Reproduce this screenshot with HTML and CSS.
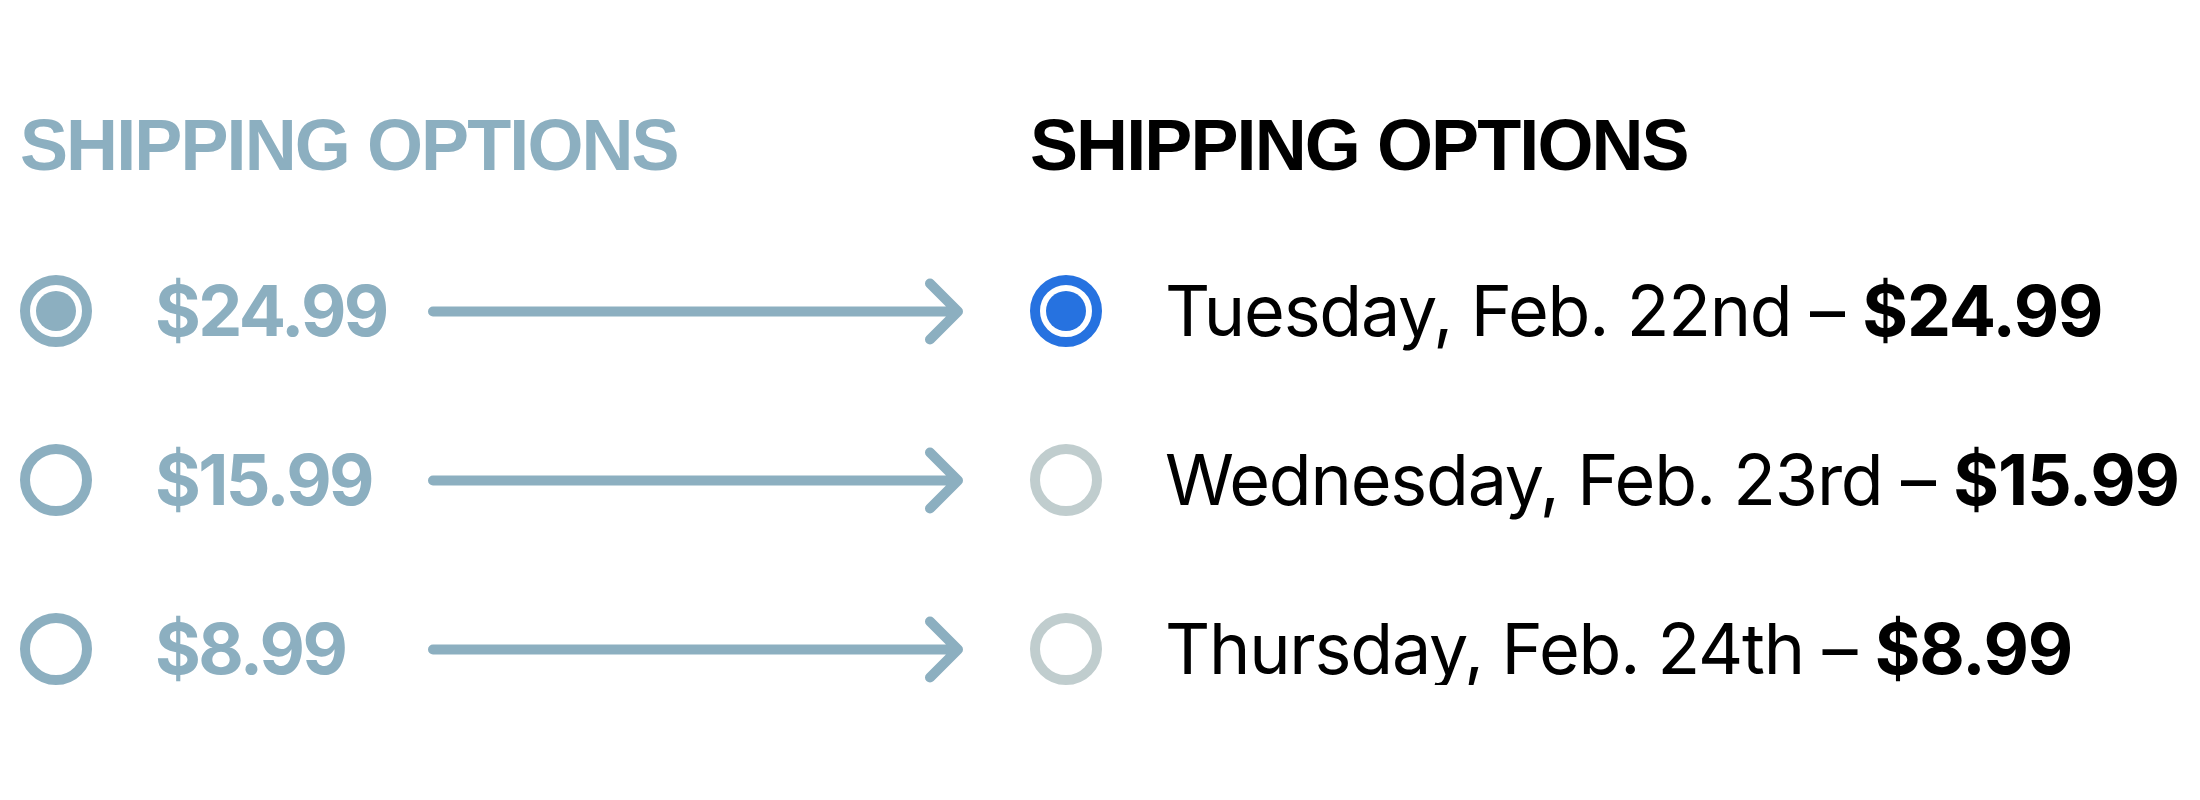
FILE: index.html
```html
<!DOCTYPE html>
<html lang="en">
<head>
<meta charset="utf-8">
<title>Shipping options</title>
<link rel="stylesheet" href="styles.css">
</head>
<body>
<main class="compare">
  <section class="panel panel-before">
    <h2 class="heading heading-muted">SHIPPING OPTIONS</h2>
    <ul class="options">
      <li class="option">
        <span class="radio radio-muted is-checked"></span>
        <span class="price">$24.99</span>
        <svg class="arrow" viewBox="0 0 540 72" width="540" height="72" aria-hidden="true">
          <path d="M5 36.5 H530 M502 8.5 L530 36.5 L502 64.5" fill="none" stroke="#8cafc0" stroke-width="10" stroke-linecap="round" stroke-linejoin="round"/>
        </svg>
      </li>
      <li class="option">
        <span class="radio radio-muted"></span>
        <span class="price">$15.99</span>
        <svg class="arrow" viewBox="0 0 540 72" width="540" height="72" aria-hidden="true">
          <path d="M5 36.5 H530 M502 8.5 L530 36.5 L502 64.5" fill="none" stroke="#8cafc0" stroke-width="10" stroke-linecap="round" stroke-linejoin="round"/>
        </svg>
      </li>
      <li class="option">
        <span class="radio radio-muted"></span>
        <span class="price">$8.99</span>
        <svg class="arrow" viewBox="0 0 540 72" width="540" height="72" aria-hidden="true">
          <path d="M5 36.5 H530 M502 8.5 L530 36.5 L502 64.5" fill="none" stroke="#8cafc0" stroke-width="10" stroke-linecap="round" stroke-linejoin="round"/>
        </svg>
      </li>
    </ul>
  </section>
  <section class="panel panel-after">
    <h2 class="heading">SHIPPING OPTIONS</h2>
    <ul class="options">
      <li class="option">
        <span class="radio radio-active is-checked"></span>
        <span class="label">Tuesday, Feb. 22nd – <b>$24.99</b></span>
      </li>
      <li class="option">
        <span class="radio radio-idle"></span>
        <span class="label">Wednesday, Feb. 23rd – <b>$15.99</b></span>
      </li>
      <li class="option">
        <span class="radio radio-idle"></span>
        <span class="label">Thursday, Feb. 24th – <b>$8.99</b></span>
      </li>
    </ul>
  </section>
</main>
</body>
</html>
```
FILE: styles.css
```css
* { box-sizing: border-box; }

html, body {
  margin: 0;
  padding: 0;
  background: #ffffff;
}

body {
  font-family: Inter, "Noto Sans", sans-serif;
  color: #000;
}

.compare {
  display: flex;
  padding: 109px 0 0 20px;
}

.panel-before {
  width: 1010px;
  flex: none;
}

.panel-after {
  flex: 1;
}

.heading {
  margin: 0 0 94px;
  font-family: "Liberation Sans", Arial, sans-serif;
  font-weight: 700;
  font-size: 72px;
  line-height: 72px;
  height: 72px;
  letter-spacing: -1.9px;
  white-space: nowrap;
  color: #000;
}

.heading-muted {
  color: #8cafc0;
}

.options {
  list-style: none;
  margin: 0;
  padding: 0;
  display: flex;
  flex-direction: column;
  gap: 97px;
}

.option {
  display: flex;
  align-items: center;
  height: 72px;
}

.radio {
  flex: none;
  width: 72px;
  height: 72px;
  border-radius: 50%;
  border: 10px solid #8cafc0;
  display: flex;
  align-items: center;
  justify-content: center;
  margin-right: 63px;
}

.radio.is-checked::after {
  content: "";
  width: 40px;
  height: 40px;
  border-radius: 50%;
  background: currentColor;
}

.radio-muted { border-color: #8cafc0; color: #8cafc0; }
.radio-active { border-color: #2672e0; color: #2672e0; }
.radio-idle { border-color: #c0cdce; }

.price {
  width: 273px;
  flex: none;
  font-weight: 700;
  font-size: 70px;
  line-height: 72px;
  letter-spacing: -2.6px;
  color: #8cafc0;
  white-space: nowrap;
}

.arrow {
  flex: none;
  display: block;
}

.label {
  font-size: 70px;
  line-height: 72px;
  font-weight: 400;
  letter-spacing: -1.2px;
  white-space: nowrap;
  color: #000;
}

.label b {
  font-weight: 700;
}
```
